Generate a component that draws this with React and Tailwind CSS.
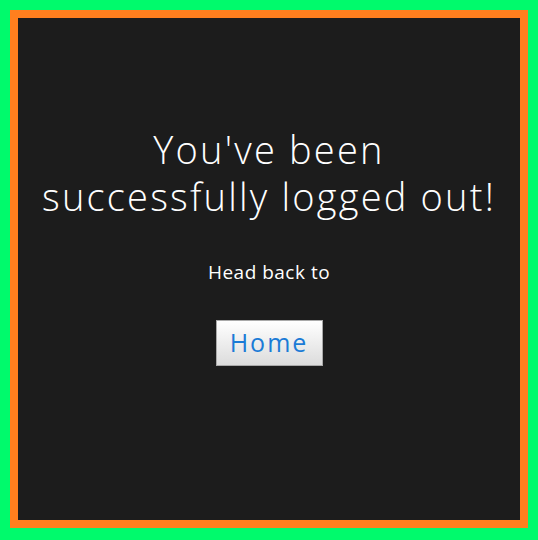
export default function App() {
  return (
    <div className="w-[538px] h-[540px] bg-[#00fa6c] p-[10px]">
      <div className="w-[518px] h-[518px] border-8 border-[#ff7f1e] bg-[#1c1c1c] flex flex-col items-center pt-[108px] text-white font-['Open_Sans',sans-serif] text-center">
        <h1 className="text-[38px] leading-[47px] font-light tracking-[2.2px]">
          You've been
          <br />
          successfully logged out!
        </h1>
        <p className="mt-[40px] text-[19px] leading-6 font-normal tracking-[0.5px]">Head back to</p>
        <a
          href="#"
          className="mt-[36px] w-[107px] h-[46px] flex items-center justify-center border border-[#a9a9a9] bg-gradient-to-b from-white to-[#dcdcdc] text-[#1b7bd6] text-[25px] tracking-[2px] font-normal"
        >
          Home
        </a>
      </div>
    </div>
  )
}
